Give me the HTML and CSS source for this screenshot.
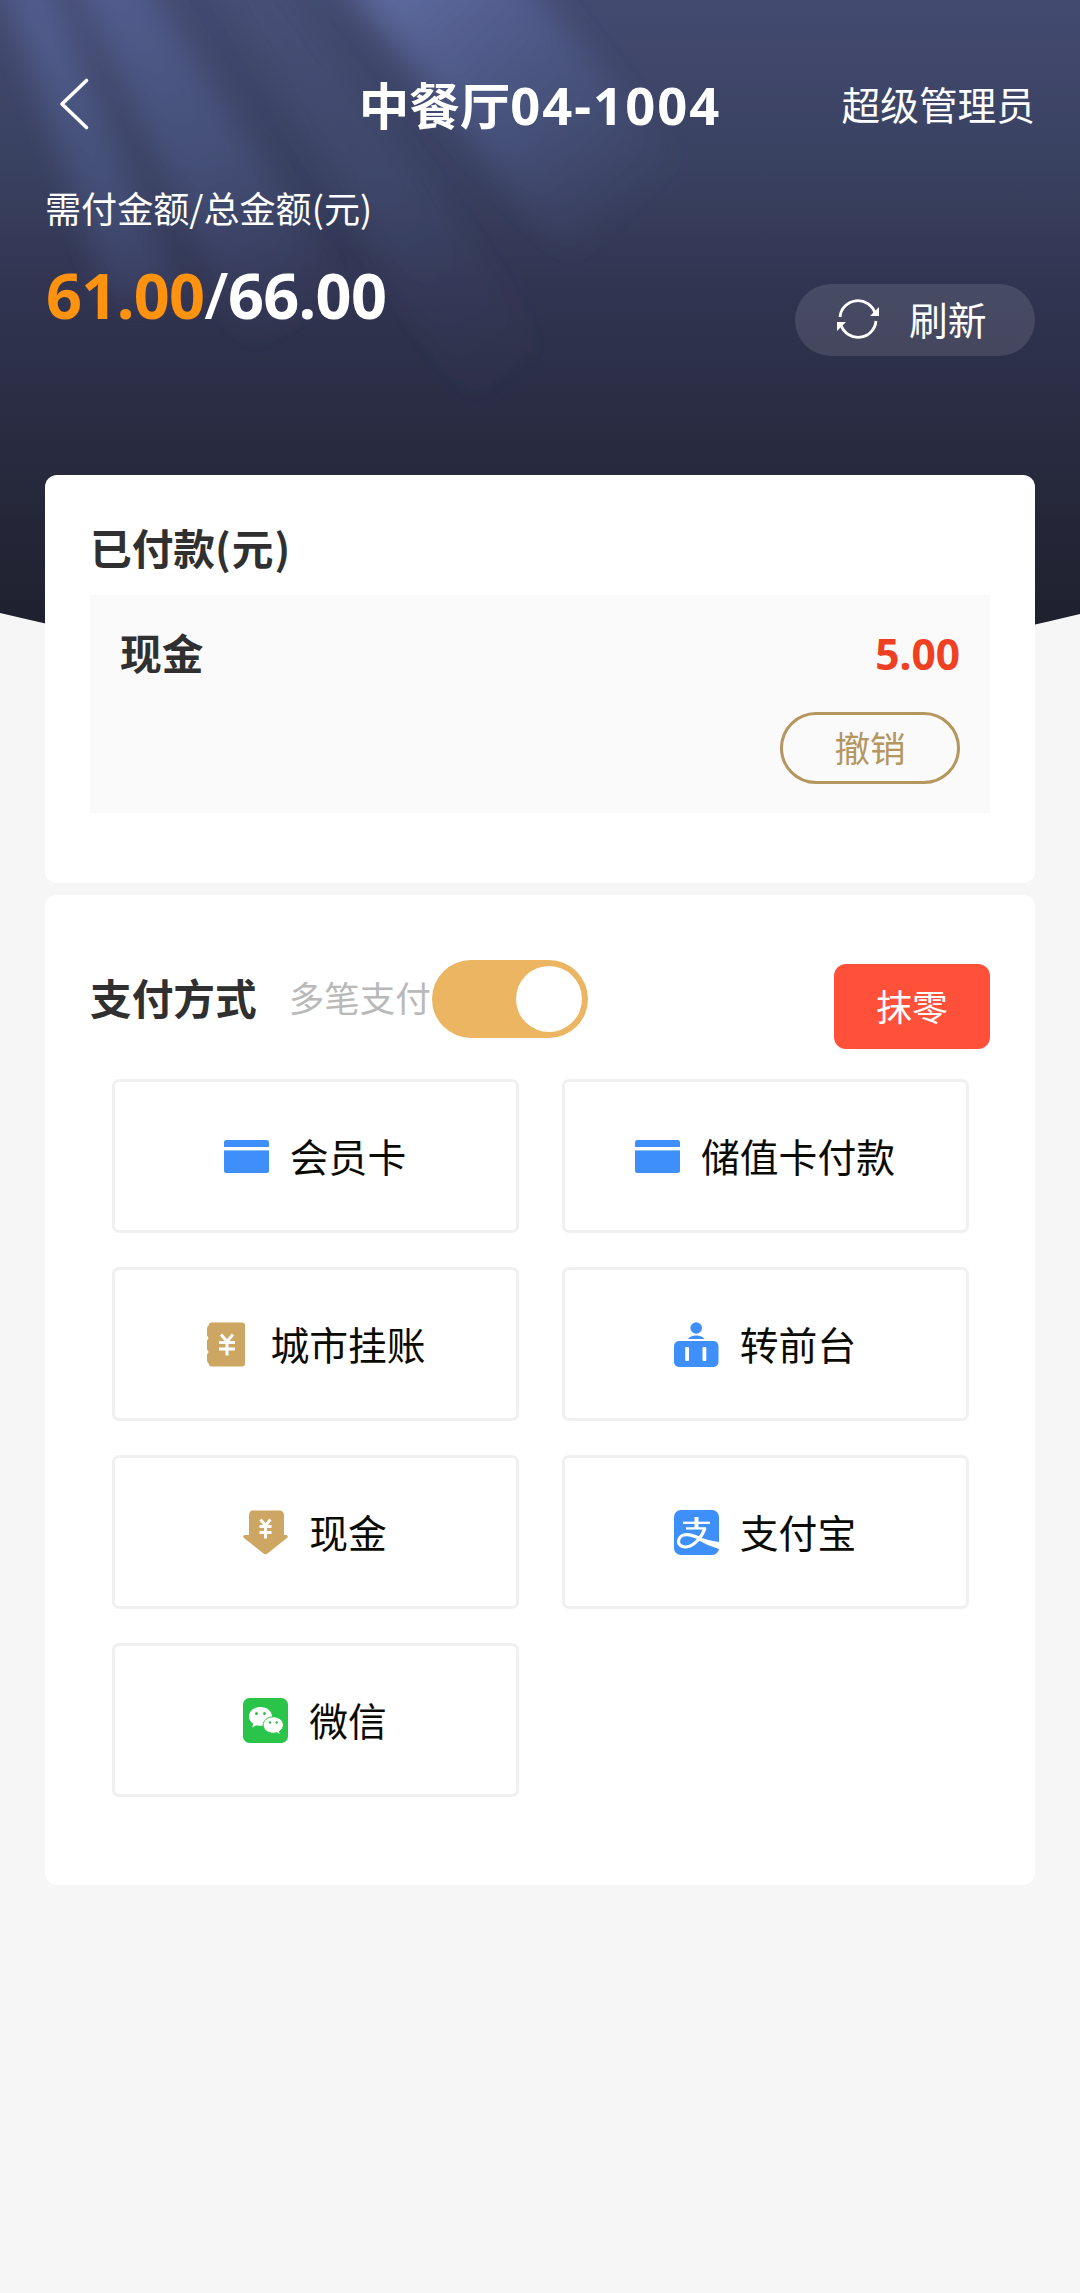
FILE: index.html
```html
<!DOCTYPE html>
<html lang="zh-CN">
<head>
<meta charset="utf-8">
<title>中餐厅04-1004</title>
<link rel="stylesheet" href="styles.css">
</head>
<body>
<div class="page">
  <svg class="backdrop" viewBox="0 0 1080 690" aria-hidden="true">
    <defs>
      <linearGradient id="night" x1="0" y1="0" x2="0" y2="630" gradientUnits="userSpaceOnUse">
        <stop offset="0" stop-color="#434a70"/>
        <stop offset=".27" stop-color="#394160"/>
        <stop offset=".45" stop-color="#323552"/>
        <stop offset=".62" stop-color="#2b2e45"/>
        <stop offset="1" stop-color="#1f202e"/>
      </linearGradient>
      <linearGradient id="beamA" x1="80" y1="0" x2="270" y2="350" gradientUnits="userSpaceOnUse">
        <stop offset="0" stop-color="#6475b4" stop-opacity=".45"/>
        <stop offset=".55" stop-color="#5a6aa4" stop-opacity=".3"/>
        <stop offset="1" stop-color="#5a6aa4" stop-opacity="0"/>
      </linearGradient>
      <linearGradient id="beamB" x1="400" y1="0" x2="620" y2="230" gradientUnits="userSpaceOnUse">
        <stop offset="0" stop-color="#6c7cb8" stop-opacity=".6"/>
        <stop offset=".4" stop-color="#5f70ac" stop-opacity=".4"/>
        <stop offset="1" stop-color="#5f70ac" stop-opacity="0"/>
      </linearGradient>
      <linearGradient id="beamC" x1="230" y1="0" x2="510" y2="400" gradientUnits="userSpaceOnUse">
        <stop offset="0" stop-color="#5d6a9c" stop-opacity=".14"/>
        <stop offset=".5" stop-color="#56659a" stop-opacity=".18"/>
        <stop offset="1" stop-color="#56659a" stop-opacity="0"/>
      </linearGradient>
      <filter id="haze" x="-20%" y="-20%" width="140%" height="140%"><feGaussianBlur stdDeviation="15"/></filter>
      <clipPath id="bowl"><path d="M0 0H1080V614Q540 746 0 613Z"/></clipPath>
    </defs>
    <g clip-path="url(#bowl)">
      <rect width="1080" height="690" fill="url(#night)"/>
      <g filter="url(#haze)">
        <path d="M-5-40H40L185 300L110 300Z" fill="url(#beamA)"/>
        <path d="M65-40H130L390 360L250 360Z" fill="url(#beamA)"/>
        <path d="M205-40H260L610 430L480 430Z" fill="url(#beamC)"/>
        <path d="M310-60H490L800 300L600 300Z" fill="url(#beamB)"/>
      </g>
    </g>
  </svg>

  <header class="header">
    <div class="topbar">
      <svg class="back" viewBox="0 0 32 54"><path d="M28.500 3.500L4 27L28.500 50.500" fill="none" stroke="#fff" stroke-width="3.600" stroke-linecap="round" stroke-linejoin="round"/></svg>
      <h1 class="title">中餐厅<span class="num">04-1004</span></h1>
      <span class="user">超级管理员</span>
    </div>
    <p class="due-label">需付金额/总金额(元)</p>
    <div class="due-row">
      <p class="due"><span class="due-now">61.00</span><span class="slash">/</span>66.00</p>
      <button class="refresh">
        <svg class="refresh-icon" viewBox="0 0 42 40">
          <g fill="none" stroke="#fff" stroke-width="2.800">
            <path d="M3 18A18 18 0 0 1 38 14"/>
            <path d="M39 22A18 18 0 0 1 4 26"/>
          </g>
          <path d="M42 8V17H33Z" fill="#fff"/>
          <path d="M0 32V23H9Z" fill="#fff"/>
        </svg>
        <span>刷新</span>
      </button>
    </div>
  </header>

  <main class="cards">
    <section class="card paid">
      <h2 class="heading">已付款<span class="unit">(元)</span></h2>
      <div class="paid-item">
        <div class="paid-line"><span class="heading">现金</span><span class="paid-amount">5.00</span></div>
        <button class="revoke">撤销</button>
      </div>
    </section>

    <section class="card methods">
      <div class="methods-head">
        <div class="methods-left">
          <h2 class="heading">支付方式</h2>
          <span class="multi">多笔支付</span>
          <span class="toggle"><span class="knob"></span></span>
        </div>
        <button class="round-off">抹零</button>
      </div>
      <div class="grid">
        <button class="tile">
          <svg class="icon" viewBox="0 0 45 45"><rect y="6" width="45" height="33" rx="2.500" fill="#3f8ffa"/><rect y="13" width="45" height="3.400" fill="#fff"/></svg>
          <span>会员卡</span>
        </button>
        <button class="tile">
          <svg class="icon" viewBox="0 0 45 45"><rect y="6" width="45" height="33" rx="2.500" fill="#3f8ffa"/><rect y="13" width="45" height="3.400" fill="#fff"/></svg>
          <span>储值卡付款</span>
        </button>
        <button class="tile">
          <svg class="icon" viewBox="0 0 45 45">
            <path d="M7.500 .500H38Q41 .500 41 3.500V41.500Q41 44.500 38 44.500H7.500Q5 44.500 4.600 41.500Q3 41 3 38V32Q4.400 31.500 4.400 30T3 28V18Q4.400 17.500 4.400 16T3 14V7Q3 4 4.600 3.500Q5 .500 7.500 .500Z" fill="#cda664"/>
            <path d="M17 12.500L23 19.500L29 12.500M23 19.500V33.500M15 20.500H31M15 27H31" fill="none" stroke="#fff" stroke-width="3"/>
          </svg>
          <span>城市挂账</span>
        </button>
        <button class="tile">
          <svg class="icon" viewBox="0 0 45 45">
            <g fill="#3f8ffa"><circle cx="22.200" cy="6" r="5.800"/><path d="M14 17Q16 13.400 22.200 13.400T30.400 17Z"/><rect y="19" width="44.500" height="26" rx="5"/></g>
            <rect x="11.200" y="25" width="3.800" height="14" rx="1" fill="#fff"/><rect x="28.500" y="25" width="3.800" height="14" rx="1" fill="#fff"/>
          </svg>
          <span>转前台</span>
        </button>
        <button class="tile">
          <svg class="icon" viewBox="0 0 45 45">
            <path d="M10 .500H36Q41 .500 41 5.500V25H43.500Q46 26 44 28L24.500 43.500Q22.500 45 20.500 43.500L1 28Q-1 26 1.500 25H6V5.500Q6 .500 10 .500Z" fill="#cda664"/>
            <path d="M17.500 9.500L22.500 15.500L27.500 9.500M22.500 15.500V28.500M16.500 16.500H28.500M16.500 22.500H28.500" fill="none" stroke="#fff" stroke-width="2.900"/>
          </svg>
          <span>现金</span>
        </button>
        <button class="tile">
          <svg class="icon" viewBox="0 0 45 45">
            <rect width="45" height="45" rx="7" fill="#3f8ffa"/>
            <g fill="none" stroke="#fff">
              <path d="M22.500 7V18.500" stroke-width="4"/>
              <path d="M9 12.800H36" stroke-width="2.300"/>
              <path d="M12 18.400H32" stroke-width="2.300"/>
              <path d="M31 18C28.500 26 20 37 11.500 37C6.500 37 4.200 34.200 4.500 30.800C5 26.500 9 24.300 13.500 24.600C18 25 23 27 27.500 29.500" stroke-width="3.200"/>
            </g>
            <path d="M23 26Q33 30.500 45 32V39Q34 36 23 29.500Z" fill="#fff"/>
          </svg>
          <span>支付宝</span>
        </button>
        <button class="tile">
          <svg class="icon" viewBox="0 0 45 45">
            <rect width="45" height="45" rx="6.500" fill="#2ac44b"/>
            <path d="M17.500 9C11 9 6 13.200 6 18.400C6 21.400 7.700 24 10.200 25.700L9.300 29.500L13.600 27.200Q15.500 27.800 17.500 27.800C24 27.800 29 23.600 29 18.400S24 9 17.500 9Z" fill="#fff"/>
            <path d="M30.300 18.800C24.600 18.800 20.200 22.500 20.200 27S24.600 35.200 30.300 35.200Q32 35.200 33.600 34.700L37.300 36.600L36.500 33.300C38.900 31.800 40.400 29.500 40.400 27C40.400 22.500 36 18.800 30.300 18.800Z" fill="#fff" stroke="#2ac44b" stroke-width="1"/>
            <g fill="#2ac44b"><circle cx="13.500" cy="15.500" r="1.500"/><circle cx="21.500" cy="15.500" r="1.500"/><circle cx="27" cy="24.500" r="1.200"/><circle cx="33.700" cy="24.500" r="1.200"/></g>
          </svg>
          <span>微信</span>
        </button>
      </div>
    </section>
  </main>
</div>
</body>
</html>
```
FILE: styles.css
```css
* { box-sizing: border-box; margin: 0; padding: 0; }

body {
  background: #f6f6f6;
  font-family: "Noto Sans CJK SC", sans-serif;
  color: #303030;
}

button { border: 0; background: none; font: inherit; color: inherit; }
svg { display: block; }

.page { position: relative; min-height: 2293px; }
.backdrop { position: absolute; top: 0; left: 0; width: 1080px; height: 690px; }

.header { position: relative; height: 475px; padding: 64px 45px 0; color: #fff; }

.topbar { display: grid; grid-template-columns: 1fr auto 1fr; align-items: center; height: 80px; }
.back { width: 32px; height: 54px; margin-left: 13px; }
.title { font-size: 50.500px; font-weight: 700; line-height: 78px; white-space: nowrap; }
.num { font-family: "Noto Sans", sans-serif; font-size: 52.500px; letter-spacing: 2px; }
.user { justify-self: end; margin-top: -2px; font-size: 38.700px; line-height: 78px; }

.due-label { margin-top: 38px; font-size: 36.100px; line-height: 50px; }
.due-row { display: flex; justify-content: space-between; margin-top: 27px; }
.due { padding-left: 1px; font-family: "Noto Sans", sans-serif; font-size: 63px; font-weight: 700; line-height: 72px; letter-spacing: -.700px; }
.due-now { color: #ff930f; }
.slash { font-weight: 500; }

.refresh {
  display: flex; align-items: center; gap: 30px;
  width: 240px; height: 72px; margin-top: 25px; padding-left: 42px;
  border-radius: 36px; background: rgba(255, 255, 255, .11);
  font-size: 38.800px; line-height: 68px;
}
.refresh span { margin-top: -4px; }
.refresh-icon { width: 42px; height: 40px; margin-top: -2px; }

.cards { position: relative; display: flex; flex-direction: column; gap: 12px; padding: 0 45px; }
.card { border-radius: 12px; background: #fff; }
.heading { font-size: 41.700px; font-weight: 700; line-height: 50px; }
.unit { letter-spacing: 1px; }

.paid { height: 408px; padding: 47px 45px 0; }
.paid-item {
  display: flex; flex-direction: column; gap: 35px;
  height: 218px; margin-top: 23px; padding: 32px 30px 29px;
  background: #fafafa;
}
.paid-line { display: flex; justify-content: space-between; }
.paid-amount { font-family: "Noto Sans", sans-serif; font-size: 42.500px; font-weight: 700; line-height: 54px; height: 50px; color: #f04023; }
.revoke {
  align-self: flex-end; width: 180px; height: 72px; padding-bottom: 2px;
  border: 3px solid #b4965f; border-radius: 36px;
  font-size: 35.600px; line-height: 62px; color: #b4965f;
}

.methods { height: 990px; padding: 65px 45px 0; }
.methods-head { display: flex; justify-content: space-between; height: 89px; }
.methods-left { display: flex; align-items: center; height: 78px; }
.methods-left .heading { margin-top: -4px; }
.multi { margin: -4px 0 0 32px; font-size: 35.500px; line-height: 50px; color: #b9b9b9; }
.toggle {
  display: flex; justify-content: flex-end; width: 156px; height: 78px; margin-left: 1px;
  padding: 6px; border-radius: 39px; background: #ebb561;
}
.knob { width: 66px; height: 66px; border-radius: 50%; background: #fff; }
.round-off {
  width: 156px; height: 85px; margin-top: 4px; padding-bottom: 3px;
  border-radius: 12px; background: #ff5139;
  font-size: 35.800px; color: #fff;
}

.grid {
  display: grid; grid-template-columns: 407px 407px; grid-auto-rows: 154px;
  gap: 34px 43px; justify-content: center; margin-top: 30px;
}
.tile {
  display: flex; align-items: center; justify-content: center; gap: 21px;
  border: 3px solid #f0f0f0; border-radius: 7px;
  font-size: 38.800px; line-height: 60px; color: #0b0b05;
}
.tile span { margin-top: -3px; }
.icon { width: 45px; height: 45px; }
```
